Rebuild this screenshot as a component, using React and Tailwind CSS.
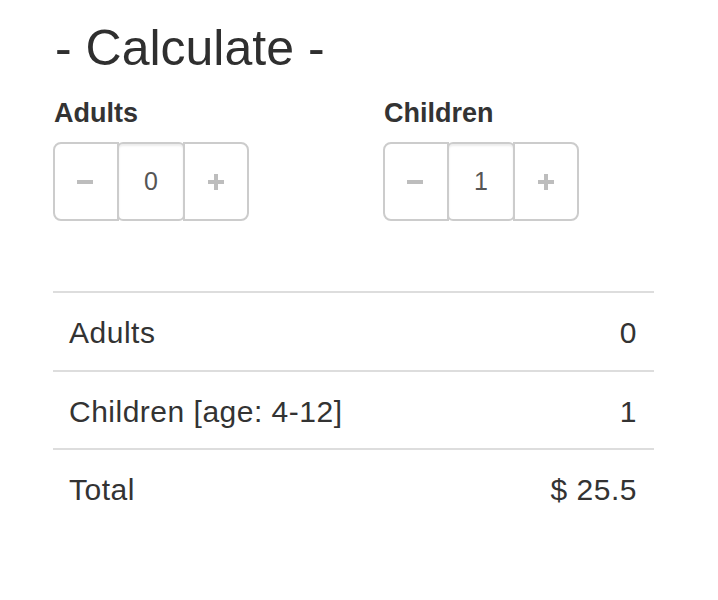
import React from "react";

function Minus() {
  return (
    <svg width="16" height="16" viewBox="0 0 16 16" aria-hidden="true">
      <rect x="0" y="6" width="16" height="4" fill="#bdbdbd" />
    </svg>
  );
}

function Plus() {
  return (
    <svg width="16" height="16" viewBox="0 0 16 16" aria-hidden="true">
      <rect x="0" y="6" width="16" height="4" fill="#bdbdbd" />
      <rect x="6" y="0" width="4" height="16" fill="#bdbdbd" />
    </svg>
  );
}

function Counter({ label, value }) {
  return (
    <div className="w-[330px] flex flex-col">
      <div className="text-[27px] leading-[30px] font-bold text-[#333] pl-[1px]">{label}</div>
      <div className="flex mt-[14px]">
        <button className="w-[66px] h-[79px] border-2 border-[#ccc] rounded-l-[8px] bg-white flex items-center justify-center pr-[2px]">
          <Minus />
        </button>
        <div className="w-[68px] h-[79px] -ml-[2px] border-2 border-[#ccc] rounded-[6px] bg-white flex items-center justify-center text-[25px] text-[#555] shadow-[inset_0_2px_2px_rgba(0,0,0,0.075)] relative z-10">
          {value}
        </div>
        <button className="w-[66px] h-[79px] -ml-[2px] border-2 border-[#ccc] rounded-r-[8px] bg-white flex items-center justify-center">
          <Plus />
        </button>
      </div>
    </div>
  );
}

function Row({ label, value, h }) {
  return (
    <div className={`flex items-center justify-between border-t-2 border-[#ddd] pl-[16px] pr-[17px] text-[30px] tracking-[0.5px] text-[#333] pt-[2px] ${h}`}>
      <span>{label}</span>
      <span>{value}</span>
    </div>
  );
}

export default function App() {
  return (
    <div className="bg-white min-h-[600px] w-[718px] pl-[53px]" style={{ fontFamily: '"Liberation Sans", Arial, sans-serif' }}>
      <div className="pt-[21px]">
        <h1 className="text-[50px] leading-[55px] text-[#2f2f2f] pl-[2px]">- Calculate -</h1>
        <div className="flex mt-[22px]">
          <Counter label="Adults" value="0" />
          <Counter label="Children" value="1" />
        </div>
        <div className="w-[601px] mt-[70px]">
          <Row label="Adults" value="0" h="h-[79px]" />
          <Row label="Children [age: 4-12]" value="1" h="h-[78px]" />
          <Row label="Total" value="$ 25.5" h="h-[78px]" />
        </div>
      </div>
    </div>
  );
}
